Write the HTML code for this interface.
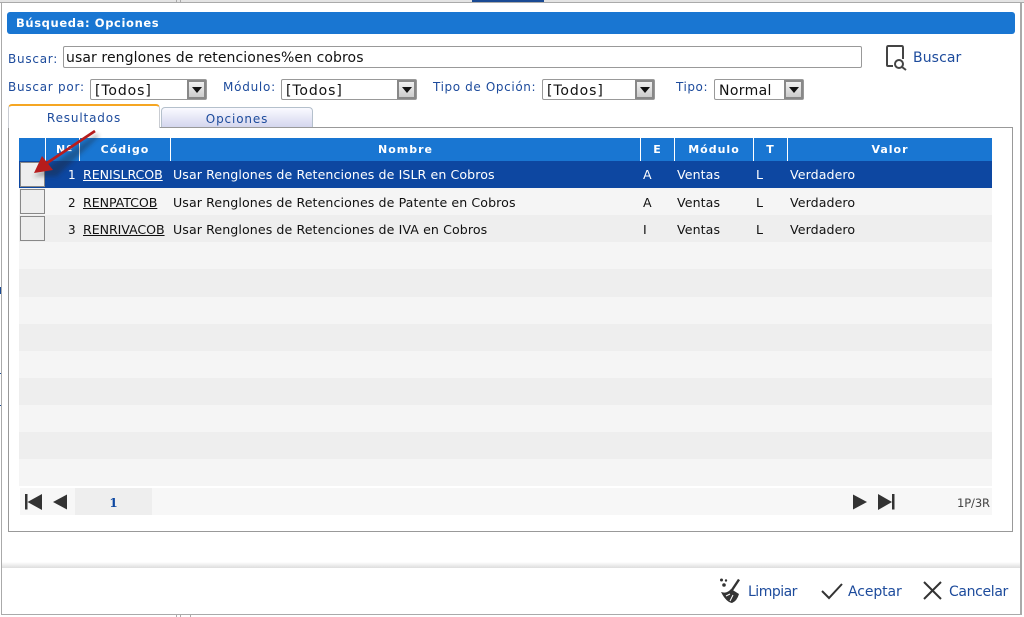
<!DOCTYPE html>
<html lang="es"><head><meta charset="utf-8"><title>Búsqueda: Opciones</title>
<style>
html,body{margin:0;padding:0;width:1024px;height:617px;overflow:hidden;background:#fff}
body{position:relative;font-family:"DejaVu Sans",sans-serif;font-size:12px;color:#111}
.a{position:absolute;white-space:nowrap}
.l{color:#1d4b9c;font-size:12px;letter-spacing:.75px;line-height:14px}
.sel{position:absolute;box-sizing:border-box;height:21px;top:79px;border:1px solid #999;border-radius:2px;background:#fff;font-size:14px;line-height:22px;padding-left:4px;letter-spacing:.9px;color:#111}
.sel i{position:absolute;right:0;top:0;width:19px;height:19px;box-sizing:border-box;border:2px solid #888;background:linear-gradient(#f0f0f0,#ccc)}
.sel i:after{content:"";position:absolute;left:3px;top:5px;border:5px solid transparent;border-top:6px solid #111;border-bottom:0}
.h{position:absolute;top:138px;height:23px;line-height:23px;background:#1976d2;color:#fff;font-weight:bold;font-size:11px;letter-spacing:1px;text-align:center;border-left:1px solid #fff;box-sizing:border-box}
.r{position:absolute;left:19px;width:973px}
.t{position:absolute;white-space:nowrap;font-size:12.6px;line-height:14px;letter-spacing:.09px;color:#111}
.w{color:#fff}
.cb{position:absolute;left:20px;width:25px;height:25px;box-sizing:border-box;border:1px solid #888;background:#eee}
u{text-underline-offset:1px}
.f{color:#1d4b9c;font-size:14px;line-height:16px;top:584px}
</style></head><body>
<div class="a" style="left:0;top:0;width:1024px;height:2px;background:#e4e4e4"></div>
<div class="a" style="left:472px;top:0;width:72px;height:2px;background:#1a4a94"></div>
<div class="a" style="left:0;top:2px;width:1024px;height:1px;background:#aaa"></div>
<div class="a" style="left:176px;top:0;width:1px;height:2px;background:#aaa"></div>
<div class="a" style="left:180px;top:0;width:1px;height:2px;background:#aaa"></div>
<div class="a" style="left:1px;top:2px;width:1px;height:612px;background:#aaa"></div>
<div class="a" style="left:0;top:287px;width:1px;height:7px;background:#1a4a94"></div>
<div class="a" style="left:0;top:373px;width:1px;height:1px;background:#1a4a94"></div>
<div class="a" style="left:0;top:405px;width:1px;height:1px;background:#1a4a94"></div>
<div class="a" style="left:1020px;top:2px;width:2px;height:612px;background:#aaa"></div>
<div class="a" style="left:1px;top:614px;width:1021px;height:1px;background:#aaa"></div>
<div class="a" style="left:176px;top:615px;width:1px;height:2px;background:#aaa"></div>
<div class="a" style="left:180px;top:615px;width:1px;height:2px;background:#aaa"></div>
<div class="a" style="left:190px;top:615px;width:1px;height:2px;background:#aaa"></div>

<div class="a" style="left:7px;top:12px;width:1008px;height:22px;background:#1976d2;border-radius:3px"></div>
<div class="a" style="left:16px;top:16px;color:#fff;font-weight:bold;font-size:11.5px;line-height:14px;letter-spacing:.62px">Búsqueda: Opciones</div>

<div class="a l" style="left:8px;top:52px">Buscar:</div>
<div class="a" style="left:63px;top:46px;width:799px;height:22px;box-sizing:border-box;border:1px solid #999;border-radius:2px;background:#fff;font-size:14px;line-height:23px;padding-left:2px;color:#111;letter-spacing:.09px">usar renglones de retenciones%en cobros</div>

<svg class="a" style="left:884px;top:44px" width="26" height="28" viewBox="0 0 26 28" fill="none" stroke="#444" stroke-width="2"><path d="M9 22H4Q3 22 3 21V4Q3 2 4 2H18Q19 2 19 4V15"/><circle cx="15" cy="20" r="4"/><path d="M18 23L22 26"/></svg>
<div class="a" style="left:913px;top:50px;color:#1d4b9c;font-size:14px;line-height:16px;letter-spacing:.1px">Buscar</div>

<div class="a l" style="left:8px;top:80px">Buscar por:</div>
<div class="sel" style="left:90px;width:117px">[Todos]<i></i></div>
<div class="a l" style="left:223px;top:80px">Módulo:</div>
<div class="sel" style="left:281px;width:136px">[Todos]<i></i></div>
<div class="a l" style="left:433px;top:80px;letter-spacing:.62px">Tipo de Opción:</div>
<div class="sel" style="left:542px;width:113px">[Todos]<i></i></div>
<div class="a l" style="left:676px;top:80px;letter-spacing:.55px">Tipo:</div>
<div class="sel" style="left:714px;width:90px;letter-spacing:.35px">Normal<i></i></div>

<div class="a" style="left:8px;top:127px;width:1005px;height:405px;box-sizing:border-box;border:1px solid #999;background:#fff"></div>
<div class="a" style="left:8px;top:104px;width:152px;height:24px;box-sizing:border-box;border:1px solid #c9ccd2;border-top:2px solid #f5a623;border-bottom:0;border-radius:4px 4px 0 0;background:#fff;color:#1d4b9c;text-align:center;line-height:24px;letter-spacing:.85px">Resultados</div>
<div class="a" style="left:161px;top:107px;width:152px;height:20px;box-sizing:border-box;border:1px solid #b4c0cc;border-bottom:0;border-radius:4px 4px 0 0;background:linear-gradient(#fafaff,#d4d6ee);color:#1d4b9c;text-align:center;line-height:22px;letter-spacing:.85px">Opciones</div>

<div class="h" style="left:19px;width:26px;border-left:0"></div>
<div class="h" style="left:45px;width:34px;text-align:left;padding-left:10px">Nº</div>
<div class="h" style="left:79px;width:91px">Código</div>
<div class="h" style="left:170px;width:470px">Nombre</div>
<div class="h" style="left:640px;width:34px">E</div>
<div class="h" style="left:674px;width:79px">Módulo</div>
<div class="h" style="left:753px;width:34px">T</div>
<div class="h" style="left:787px;width:205px">Valor</div>

<div class="r" style="top:161px;height:27px;background:#0d47a1"></div>
<div class="r" style="top:188px;height:27px;background:#f5f5f5"></div>
<div class="r" style="top:215px;height:27px;background:#eee"></div>
<div class="r" style="top:242px;height:27px;background:#f5f5f5"></div>
<div class="r" style="top:269px;height:28px;background:#eee"></div>
<div class="r" style="top:297px;height:27px;background:#f5f5f5"></div>
<div class="r" style="top:324px;height:27px;background:#eee"></div>
<div class="r" style="top:351px;height:27px;background:#f5f5f5"></div>
<div class="r" style="top:378px;height:27px;background:#eee"></div>
<div class="r" style="top:405px;height:27px;background:#f5f5f5"></div>
<div class="r" style="top:432px;height:27px;background:#eee"></div>
<div class="r" style="top:459px;height:27px;background:#f5f5f5"></div>

<div class="cb" style="top:162px"></div>
<div class="cb" style="top:189px"></div>
<div class="cb" style="top:216px"></div>

<div class="t w" style="left:68px;top:168px;font-size:12px">1</div>
<div class="t w" style="left:83px;top:168px;letter-spacing:-.06px"><u>RENISLRCOB</u></div>
<div class="t w" style="left:173px;top:168px">Usar Renglones de Retenciones de ISLR en Cobros</div>
<div class="t w" style="left:643px;top:168px">A</div>
<div class="t w" style="left:677px;top:168px">Ventas</div>
<div class="t w" style="left:756px;top:168px">L</div>
<div class="t w" style="left:790px;top:168px">Verdadero</div>

<div class="t" style="left:68px;top:196px;font-size:12px">2</div>
<div class="t" style="left:83px;top:196px;letter-spacing:-.06px"><u>RENPATCOB</u></div>
<div class="t" style="left:173px;top:196px">Usar Renglones de Retenciones de Patente en Cobros</div>
<div class="t" style="left:643px;top:196px">A</div>
<div class="t" style="left:677px;top:196px">Ventas</div>
<div class="t" style="left:756px;top:196px">L</div>
<div class="t" style="left:790px;top:196px">Verdadero</div>

<div class="t" style="left:68px;top:223px;font-size:12px">3</div>
<div class="t" style="left:83px;top:223px;letter-spacing:-.06px"><u>RENRIVACOB</u></div>
<div class="t" style="left:173px;top:223px">Usar Renglones de Retenciones de IVA en Cobros</div>
<div class="t" style="left:643px;top:223px">I</div>
<div class="t" style="left:677px;top:223px">Ventas</div>
<div class="t" style="left:756px;top:223px">L</div>
<div class="t" style="left:790px;top:223px">Verdadero</div>

<svg class="a" style="left:18px;top:125px" width="90" height="60" viewBox="0 0 90 60">
<defs><filter id="b" x="-20%" y="-20%" width="140%" height="140%"><feGaussianBlur stdDeviation="2"/></filter></defs>
<path d="M80 10L30 44L20 50L38 50Z" stroke="#222" stroke-width="3" opacity=".35" fill="#222" filter="url(#b)"/>
<path d="M77 6L26 40" stroke="#b71c1c" stroke-width="2.8" fill="none"/>
<path d="M16 48L24 31L35 45Z" fill="#b71c1c"/>
</svg>

<div class="a" style="left:20px;top:488px;width:972px;height:27px;background:#f7f7f7"></div>
<div class="a" style="left:75px;top:488px;width:77px;height:27px;background:#eee;color:#0d47a1;font-weight:bold;font-size:12px;line-height:30px;text-align:center;font-family:'DejaVu Serif',serif">1</div>
<svg class="a" style="left:25px;top:493px" width="44" height="18" viewBox="0 0 44 18" fill="#333"><rect x="0" y="1" width="2.5" height="15.5"/><path d="M2.5 9L17 1V17Z"/><path d="M28 9L42 1.5V16.5Z"/></svg>
<svg class="a" style="left:853px;top:493px" width="44" height="18" viewBox="0 0 44 18" fill="#333"><path d="M0 1.5L14 9L0 16.5Z"/><path d="M25 1L39 9L25 17Z"/><rect x="39" y="1" width="2.5" height="15.5"/></svg>
<div class="a" style="left:957px;top:497px;color:#444;font-size:11.5px;line-height:13px;letter-spacing:-.1px">1P/3R</div>

<div class="a" style="left:2px;top:562px;width:1018px;height:6px;background:linear-gradient(#fff,#ddd)"></div>
<div class="a" style="left:2px;top:568px;width:1018px;height:46px;background:#fff"></div>

<svg class="a" style="left:718px;top:577px" width="28" height="28" viewBox="0 0 28 28" fill="#333"><circle cx="3.5" cy="3" r="1.5"/><circle cx="8" cy="3.5" r="1.2"/><circle cx="6" cy="8" r="1.8"/><path d="M14 13L21 2.5" stroke="#333" stroke-width="2.4" fill="none"/><path d="M3 15Q9 17 13 12L21 17Q19 24 14 26Q8 25 3 15Z" fill="#333"/><path d="M8 19L12 17M12 24L15 18" stroke="#fff" stroke-width="1" fill="none"/></svg>
<div class="a f" style="left:748px;letter-spacing:-.5px">Limpiar</div>
<svg class="a" style="left:820px;top:580px" width="24" height="22" viewBox="0 0 24 22" fill="none" stroke="#333" stroke-width="2"><path d="M2 11L9 18L22 4"/></svg>
<div class="a f" style="left:848px;letter-spacing:-.1px">Aceptar</div>
<svg class="a" style="left:922px;top:580px" width="22" height="22" viewBox="0 0 22 22" fill="none" stroke="#333" stroke-width="2"><path d="M2 2L19 19M19 2L2 19"/></svg>
<div class="a f" style="left:949px;letter-spacing:-.35px">Cancelar</div>
</body></html>
